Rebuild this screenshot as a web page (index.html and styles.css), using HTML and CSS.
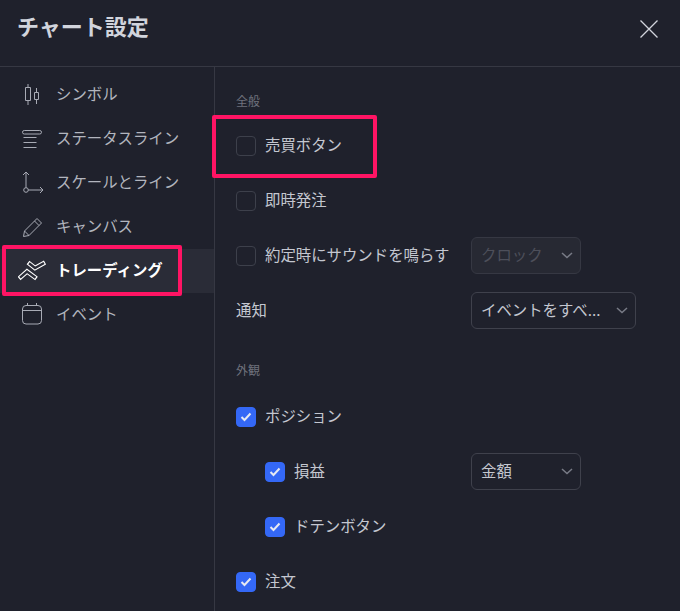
FILE: index.html
```html
<!DOCTYPE html>
<html lang="ja">
<head>
<meta charset="utf-8">
<title>チャート設定</title>
<link rel="stylesheet" href="styles.css">
</head>
<body>
<div class="dialog">
  <header class="header">
    <h1 class="title">チャート設定</h1>
    <button class="close" aria-label="閉じる">
      <svg width="20" height="20" viewBox="0 0 20 20"><path d="M1.500 1.500l17 17M18.500 1.500l-17 17" stroke="#d1d4dc" stroke-width="1.300" fill="none"/></svg>
    </button>
  </header>
  <div class="body">
    <nav class="sidebar">
      <a class="tab">
        <svg class="tab-icon" width="28" height="28" viewBox="0 0 28 28" fill="none" stroke="#a8abb5"><path d="M7.500 6.500h5v13h-5zM10 3v3.500M10 19.500V24M16.500 11.500h4v7h-4zM18.500 7v4.500M18.500 18.500V23"/></svg>
        <span>シンボル</span>
      </a>
      <a class="tab">
        <svg class="tab-icon" width="28" height="28" viewBox="0 0 28 28" fill="none" stroke="#a8abb5"><rect x="4.500" y="5.500" width="19" height="3.500" rx="1.750"/><path d="M5.500 12.500h13M5.500 17.500h13M5.500 22.500h13"/></svg>
        <span>ステータスライン</span>
      </a>
      <a class="tab">
        <svg class="tab-icon" width="28" height="28" viewBox="0 0 28 28" fill="none" stroke="#a8abb5"><circle cx="8" cy="21" r="2.300"/><path d="M8 18.700V3M5 6l3-3 3 3M10.300 21H25M22 18l3 3-3 3"/></svg>
        <span>スケールとライン</span>
      </a>
      <a class="tab">
        <svg class="tab-icon" width="28" height="28" viewBox="0 0 28 28" fill="none" stroke="#a8abb5"><path d="M19 5.500l4.500 4.500L11 22.500l-5.500 1 1-5.500zM16.500 8l4.500 4.500M6.500 18l4.500 4.500"/></svg>
        <span>キャンバス</span>
      </a>
      <a class="tab tab-active">
        <svg class="tab-icon" width="28" height="28" viewBox="0 0 28 28" fill="none"><path d="M10 5.500L17 11l10-5.500" stroke="#fff" stroke-width="4.500"/><path d="M11 6.300L17 11l9-5" stroke="#2a2c37" stroke-width="2.400"/><path d="M1 21.500l8-7 9.500 7" stroke="#fff" stroke-width="4.500"/><path d="M2 20.600l7-6.100 8.500 6.300" stroke="#2a2c37" stroke-width="2.400"/></svg>
        <span>トレーディング</span>
      </a>
      <a class="tab">
        <svg class="tab-icon" width="28" height="28" viewBox="0 0 28 28" fill="none" stroke="#a8abb5"><rect x="4.500" y="4.500" width="19" height="18.500" rx="3.500"/><path d="M4.500 9.500h19M9.500 2v3M18.500 2v3"/></svg>
        <span>イベント</span>
      </a>
    </nav>
    <main class="content">
      <div class="section-label">全般</div>
      <label class="row"><span class="box"></span><span class="text">売買ボタン</span></label>
      <label class="row"><span class="box"></span><span class="text">即時発注</span></label>
      <div class="row">
        <label class="check-cell"><span class="box"></span><span class="text">約定時にサウンドを鳴らす</span></label>
        <div class="select select-short select-disabled"><span>クロック</span>
          <svg class="chev" width="12" height="7" viewBox="0 0 12 7"><path d="M1 1l5 4.500L11 1" fill="none" stroke="currentColor" stroke-width="1.500"/></svg>
        </div>
      </div>
      <div class="row">
        <div class="check-cell"><span class="text">通知</span></div>
        <div class="select select-long"><span>イベントをすべ...</span>
          <svg class="chev" width="12" height="7" viewBox="0 0 12 7"><path d="M1 1l5 4.500L11 1" fill="none" stroke="currentColor" stroke-width="1.500"/></svg>
        </div>
      </div>
      <div class="section-label section-second">外観</div>
      <label class="row"><span class="box checked"><svg width="12" height="10" viewBox="0 0 12 10"><path d="M1.500 5l3 3 6-6.500" fill="none" stroke="#e6e9f2" stroke-width="2"/></svg></span><span class="text">ポジション</span></label>
      <div class="row nested">
        <label class="check-cell"><span class="box checked"><svg width="12" height="10" viewBox="0 0 12 10"><path d="M1.500 5l3 3 6-6.500" fill="none" stroke="#e6e9f2" stroke-width="2"/></svg></span><span class="text">損益</span></label>
        <div class="select select-short"><span>金額</span>
          <svg class="chev" width="12" height="7" viewBox="0 0 12 7"><path d="M1 1l5 4.500L11 1" fill="none" stroke="currentColor" stroke-width="1.500"/></svg>
        </div>
      </div>
      <label class="row nested"><span class="box checked"><svg width="12" height="10" viewBox="0 0 12 10"><path d="M1.500 5l3 3 6-6.500" fill="none" stroke="#e6e9f2" stroke-width="2"/></svg></span><span class="text">ドテンボタン</span></label>
      <label class="row"><span class="box checked"><svg width="12" height="10" viewBox="0 0 12 10"><path d="M1.500 5l3 3 6-6.500" fill="none" stroke="#e6e9f2" stroke-width="2"/></svg></span><span class="text">注文</span></label>
    </main>
  </div>
  <div class="mark mark-tab"></div>
  <div class="mark mark-check"></div>
</div>
</body>
</html>
```

FILE: styles.css
```css
* { box-sizing: border-box; }
html, body { margin: 0; height: 100%; }
body {
  background: #1f212c;
  color: #d1d4dc;
  font-family: "Noto Sans CJK JP", "Liberation Sans", sans-serif;
  overflow: hidden;
}
.dialog {
  position: relative;
  width: 680px;
  height: 611px;
  overflow: hidden;
}
.header {
  display: flex;
  align-items: flex-start;
  justify-content: space-between;
  height: 67px;
  padding: 10px 21px 0 17px;
  border-bottom: 1px solid #363843;
}
.title {
  margin: 0;
  font-size: 22px;
  line-height: 30px;
  font-weight: 700;
  color: #d1d4dc;
}
.close {
  display: flex;
  margin-top: 9px;
  padding: 0;
  background: none;
  border: 0;
}
.body {
  display: flex;
  height: 544px;
}
.sidebar {
  flex: none;
  width: 215px;
  padding-top: 6px;
  border-right: 1px solid #363843;
}
.tab {
  display: flex;
  align-items: center;
  gap: 10px;
  height: 44px;
  padding-left: 18px;
  font-size: 15.4px;
  color: #b2b5be;
}
.tab span { margin-bottom: 4px; }
.tab-icon { flex: none; width: 28px; height: 28px; }
.tab-active {
  background: #2a2c37;
  color: #fff;
  font-weight: 700;
}
.content {
  flex: 1;
  padding: 24px 0 0 21px;
}
.section-label {
  height: 22px;
  margin: -1px 0 6px;
  font-size: 12px;
  line-height: 22px;
  color: #6f727d;
}
.section-second { margin: 21px 0 8px; }
.row {
  display: flex;
  align-items: center;
  height: 55px;
  font-size: 15.4px;
  color: #c4c7d0;
}
.nested { padding-left: 29px; }
.check-cell {
  display: flex;
  align-items: center;
  width: 235px;
  flex: none;
}
.nested .check-cell { width: 206px; }
.box {
  display: flex;
  align-items: center;
  justify-content: center;
  flex: none;
  width: 20px;
  height: 20px;
  margin-right: 9px;
  border: 1px solid #3d404b;
  border-radius: 4px;
}
.checked {
  background: #3468f6;
  border-color: #3468f6;
}
.text { margin-bottom: 4px; line-height: 20px; white-space: nowrap; }
.select {
  display: flex;
  align-items: center;
  justify-content: space-between;
  height: 37px;
  padding: 0 7px 0 9px;
  font-size: 15.4px;
  border: 1px solid #3f414c;
  border-radius: 6px;
  white-space: nowrap;
}
.select span { margin-bottom: 4px; }
.select-short { width: 110px; }
.select-long { width: 165px; }
.select-disabled {
  background: #272933;
  border-color: #363843;
  color: #4d4f5a;
}
.chev { flex: none; color: #787b86; }
.mark {
  position: absolute;
  border: 4px solid #ff1464;
  border-radius: 2px;
}
.mark-tab { left: 2px; top: 245px; width: 180px; height: 51px; }
.mark-check { left: 212px; top: 115px; width: 165px; height: 63px; }
```
